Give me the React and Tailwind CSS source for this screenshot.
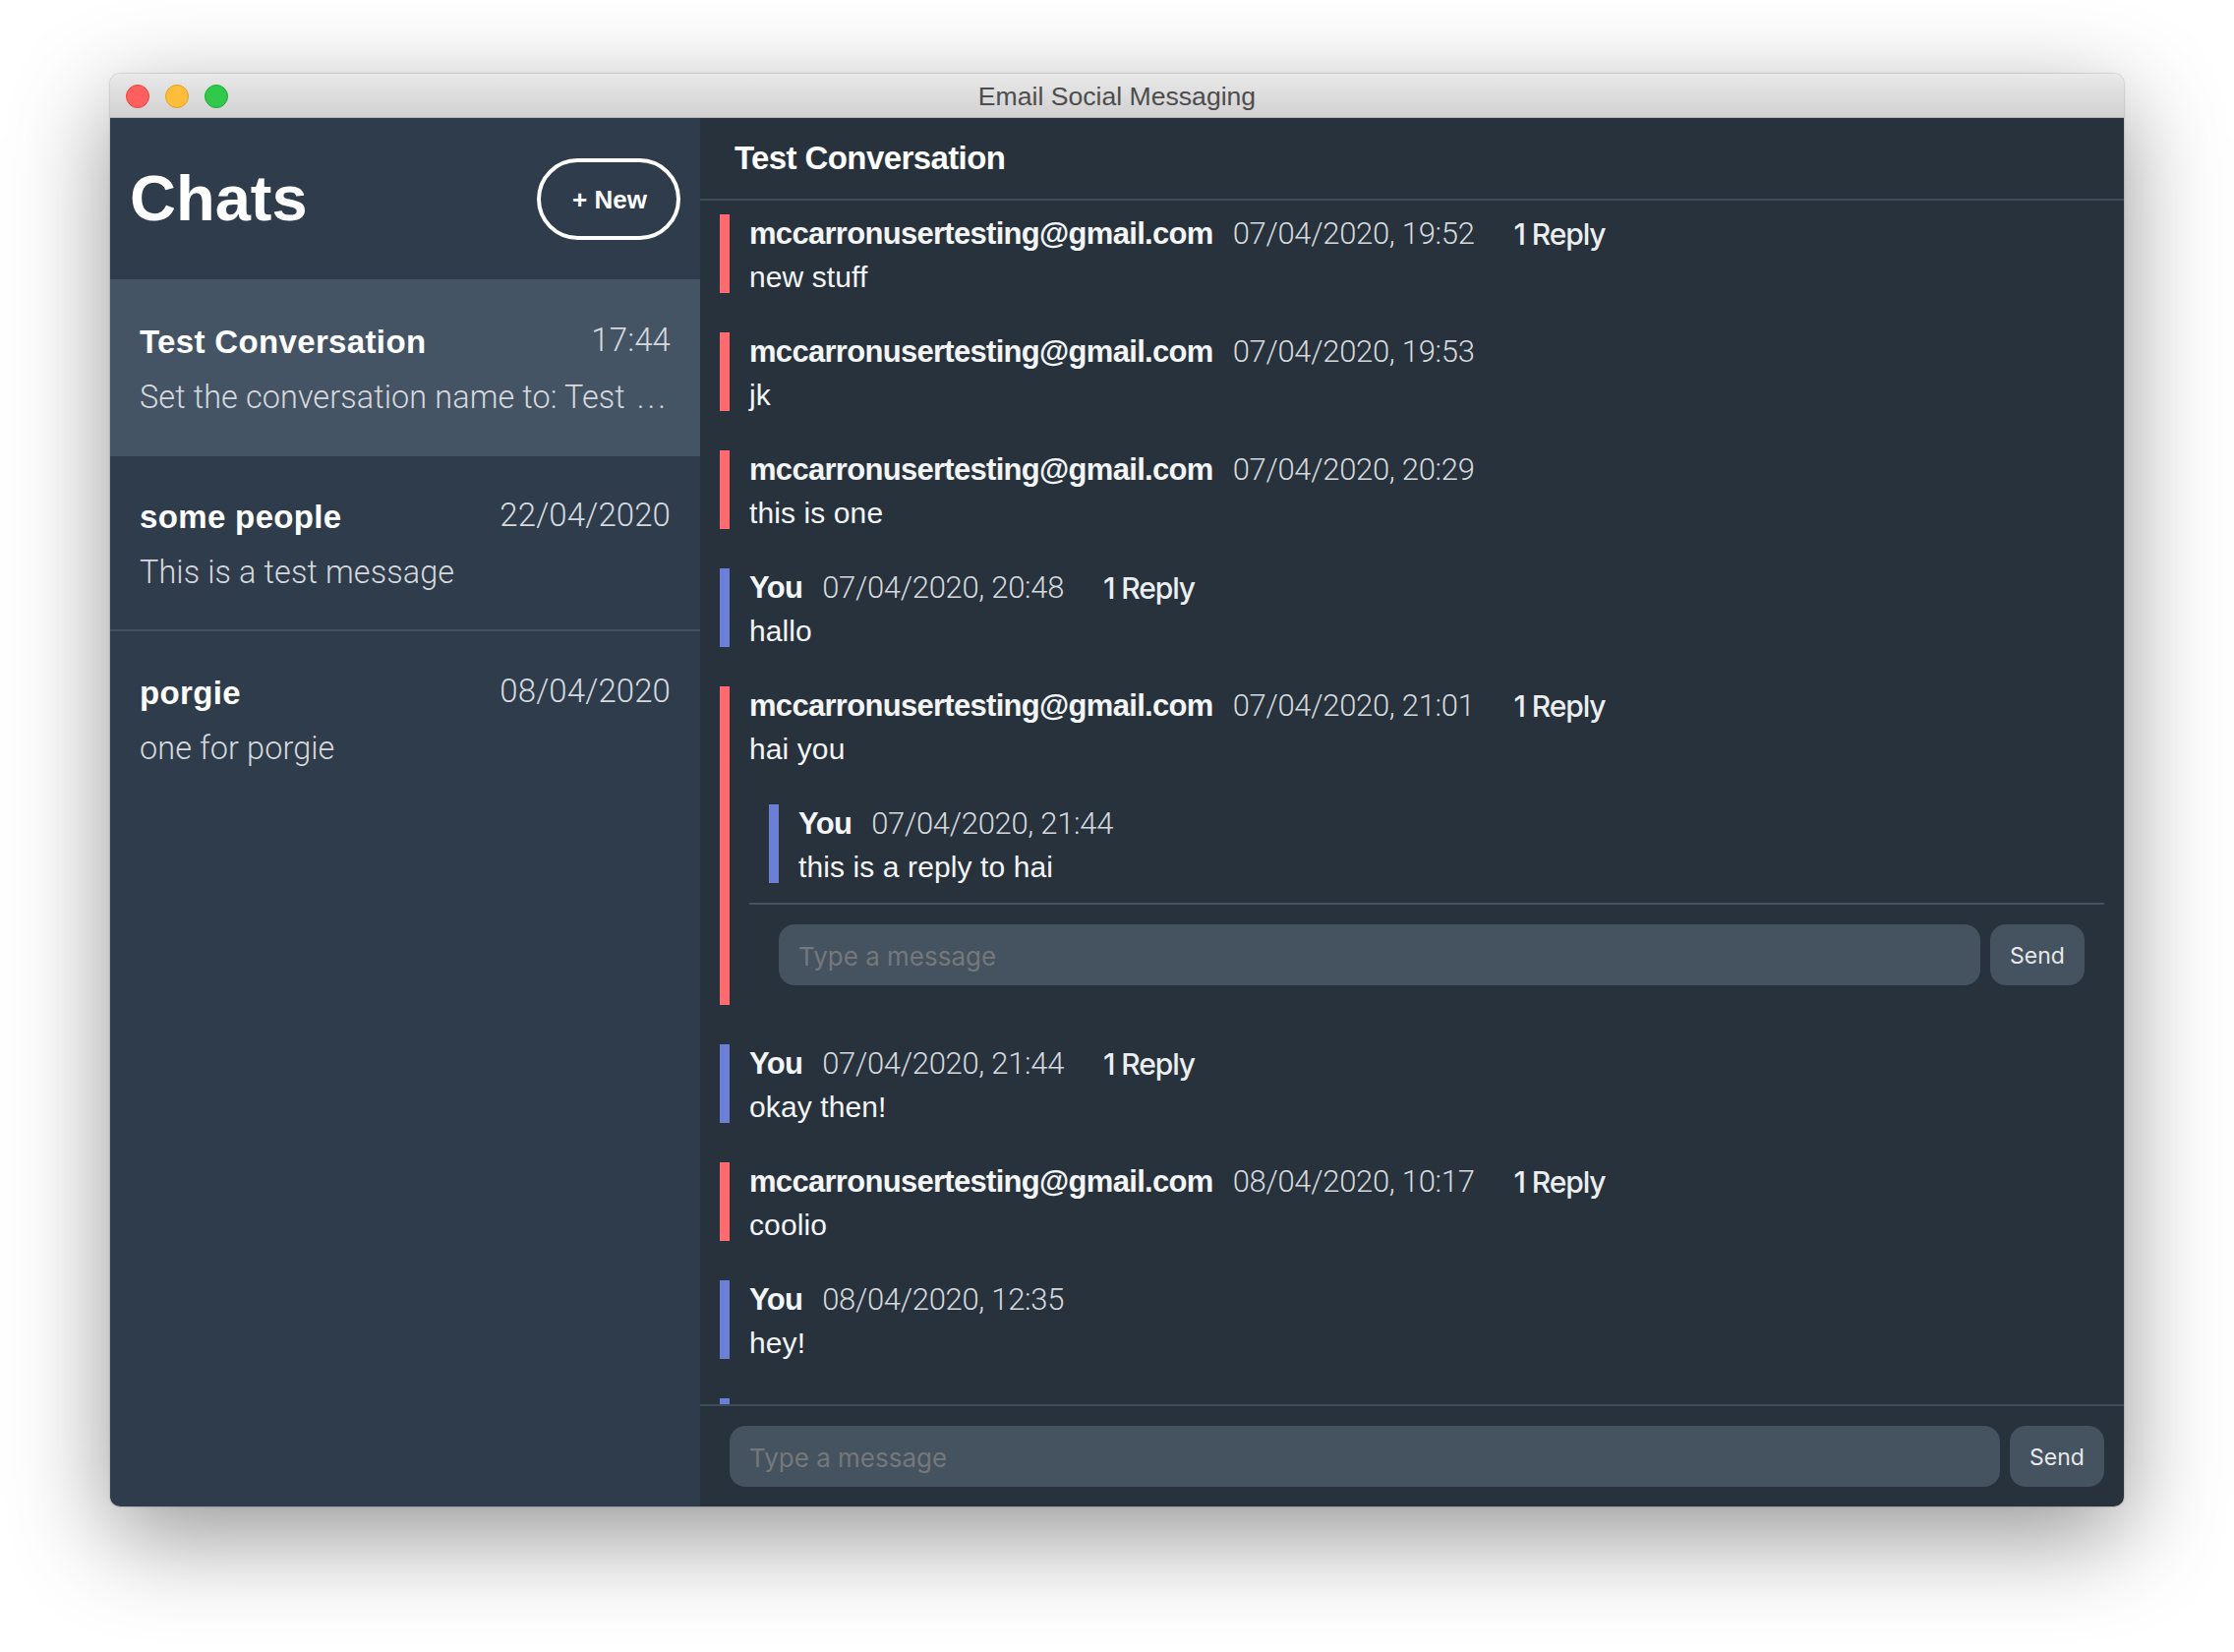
import React from 'react'

const RED = 'border-[#ff6b6f]'
const BLUE = 'border-[#6b7fd7]'
const EMAIL = 'mccarronusertesting@gmail.com'

const chats = [
  { id: 1, name: 'Test Conversation', time: '17:44', preview: 'Set the conversation name to: Test', cut: true, active: true },
  { id: 2, name: 'some people', time: '22/04/2020', preview: 'This is a test message' },
  { id: 3, name: 'porgie', time: '08/04/2020', preview: 'one for porgie' },
]

function MessageHead({ from, date, replies }) {
  return (
    <div className="flex items-center h-10">
      <span className="font-bold text-[31px] tracking-[-0.7px] text-[#f4f5f6] font-['Liberation_Sans',sans-serif]">{from}</span>
      <span className="ml-5 text-[31px] font-light text-[#d5d9dd] tracking-[-0.3px] font-['Roboto',sans-serif]">{date}</span>
      {replies && <span className="ml-10 text-[30px] tracking-[-1.1px] font-medium text-[#eceef0] font-['Inter',sans-serif]">{replies}</span>}
    </div>
  )
}

function Composer({ className }) {
  return (
    <div className={`flex gap-[10px] ${className}`}>
      <input
        placeholder="Type a message"
        className="flex-1 min-w-0 h-[62px] rounded-2xl bg-[#45525f] px-5 pt-[2px] text-[26px] font-['Inter',sans-serif] outline-none placeholder:text-[#75787b]"
      />
      <button className="w-24 h-[62px] rounded-2xl bg-[#45525f] pt-[2px] text-[23px] text-[#e6e8ea] font-['Inter',sans-serif]">Send</button>
    </div>
  )
}

function Message({ from, date, text, color, replies, children }) {
  return (
    <div className={`border-l-[10px] pl-5 ${color}`}>
      <MessageHead from={from} date={date} replies={replies} />
      <div className="h-10 leading-[48px] text-[30px] text-[#f4f5f6] tracking-[0.1px] font-['Liberation_Sans',sans-serif]">{text}</div>
      {children}
    </div>
  )
}

export default function App() {
  return (
    <div className="w-[2272px] h-[1680px] overflow-hidden bg-white pt-[75px] pl-[112px] font-['Liberation_Sans',sans-serif]">
      <div className="w-[2048px] h-[1457px] flex flex-col rounded-[10px] overflow-hidden shadow-[0_30px_100px_rgba(0,0,0,0.42),0_0_2px_rgba(0,0,0,0.4)]">
        {/* title bar */}
        <div className="relative h-[45px] shrink-0 flex items-center justify-center bg-gradient-to-b from-[#e9e9e9] to-[#d1d1d1] border-b border-[#b5b5b5]">
          <div className="absolute left-4 top-[11px] flex gap-4">
            <span className="w-6 h-6 rounded-full bg-[#ff5f5f] border border-[#e2453f]" />
            <span className="w-6 h-6 rounded-full bg-[#ffbd3a] border border-[#dfa023]" />
            <span className="w-6 h-6 rounded-full bg-[#30c94b] border border-[#1fab33]" />
          </div>
          <span className="pt-1 text-[26.6px] text-[#4d4d4d]">Email Social Messaging</span>
        </div>

        <div className="flex flex-1 min-h-0">
          {/* sidebar */}
          <div className="w-[600px] shrink-0 bg-[#2f3c4b]">
            <div className="h-[164px] flex items-center justify-between pl-5 pr-5">
              <h1 className="text-[65px] font-bold text-white">Chats</h1>
              <button className="w-[146px] h-[83px] pt-[2px] pl-[2px] rounded-full border-4 border-white text-[26px] font-bold text-white">+ New</button>
            </div>
            {chats.map((chat, i) => (
              <div
                key={chat.id}
                className={`flex flex-col justify-center gap-[22px] px-[30px] pt-[3px] ${chat.active ? 'h-[180px] bg-[#455465]' : 'h-[178px]'} ${i === 1 ? 'border-b-2 border-[#45525f]' : ''}`}
              >
                <div className="flex items-center justify-between h-[34px]">
                  <span className="text-[33px] tracking-[0.35px] font-bold text-white">{chat.name}</span>
                  <span className="pb-1 text-[33px] tracking-[0.1px] font-light text-[#d5d9dd] font-['Roboto',sans-serif]">{chat.time}</span>
                </div>
                <div className="h-[34px] leading-[34px] whitespace-nowrap text-[32.4px] tracking-[0.1px] font-light text-[#d5d9dd] font-['Roboto',sans-serif]">
                  {chat.preview}
                  {chat.cut && <span className="ml-[12px] tracking-[3px]">...</span>}
                </div>
              </div>
            ))}
          </div>

          {/* conversation */}
          <div className="flex-1 min-w-0 flex flex-col bg-[#27323d]">
            <div className="h-[84px] shrink-0 flex items-center pl-[35px] border-b-2 border-[#3f4c59]">
              <h2 className="text-[33px] font-bold tracking-[-0.6px] text-white">Test Conversation</h2>
            </div>
            <div className="flex-1 min-h-0 overflow-hidden pt-[14px] pl-5 flex flex-col gap-10">
              <Message from={EMAIL} date="07/04/2020, 19:52" text="new stuff" color={RED} replies="1 Reply" />
              <Message from={EMAIL} date="07/04/2020, 19:53" text="jk" color={RED} />
              <Message from={EMAIL} date="07/04/2020, 20:29" text="this is one" color={RED} />
              <Message from="You" date="07/04/2020, 20:48" text="hallo" color={BLUE} replies="1 Reply" />
              <Message from={EMAIL} date="07/04/2020, 21:01" text="hai you" color={RED} replies="1 Reply">
                <div className="mt-10 ml-5">
                  <Message from="You" date="07/04/2020, 21:44" text="this is a reply to hai" color={BLUE} />
                </div>
                <div className="mt-5 mr-5 border-t-2 border-[#45525f] pt-5 pb-5 pl-[30px] pr-5">
                  <Composer />
                </div>
              </Message>
              <Message from="You" date="07/04/2020, 21:44" text="okay then!" color={BLUE} replies="1 Reply" />
              <Message from={EMAIL} date="08/04/2020, 10:17" text="coolio" color={RED} replies="1 Reply" />
              <Message from="You" date="08/04/2020, 12:35" text="hey!" color={BLUE} />
              {/* next message, scrolled out of view apart from the top of its bar */}
              <div className={`h-20 shrink-0 border-l-[10px] ${BLUE}`} />
            </div>
            <Composer className="shrink-0 border-t-2 border-[#3f4c59] pt-5 pb-5 pl-[30px] pr-5" />
          </div>
        </div>
      </div>
    </div>
  )
}
